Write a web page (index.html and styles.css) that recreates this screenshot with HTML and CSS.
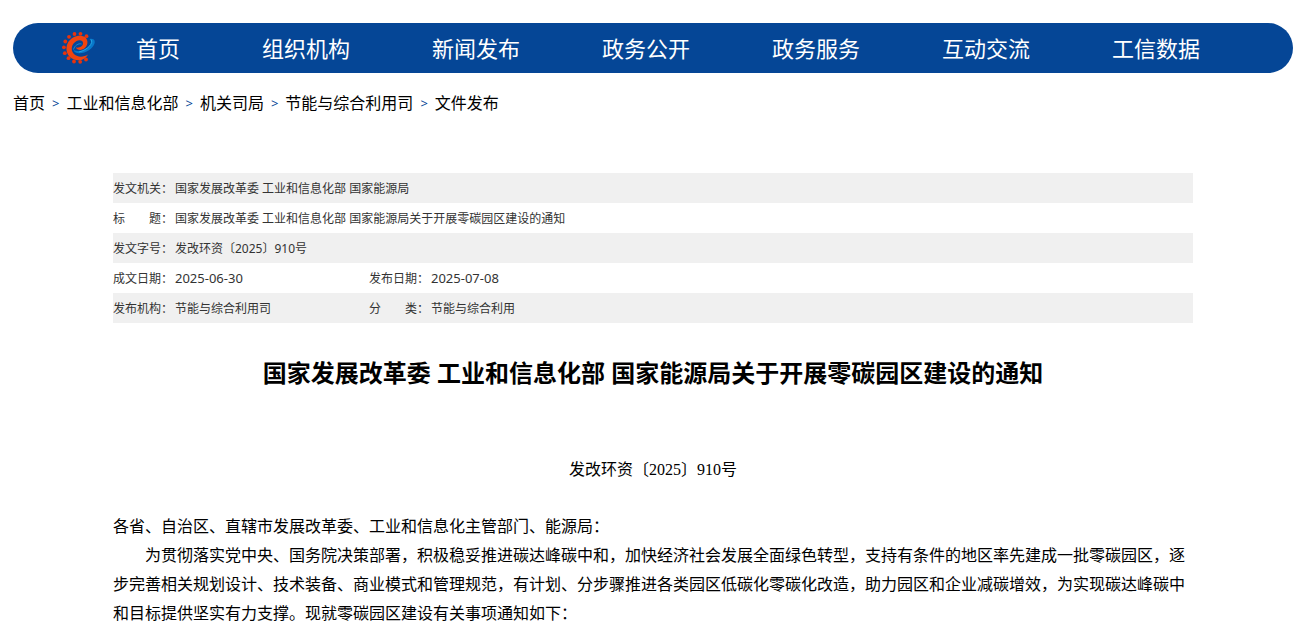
FILE: index.html
```html
<!DOCTYPE html>
<html lang="zh-CN">
<head>
<meta charset="utf-8">
<title>国家发展改革委 工业和信息化部 国家能源局关于开展零碳园区建设的通知</title>
<link rel="stylesheet" href="styles.css">
</head>
<body>
<header class="page">
  <nav class="nav" aria-label="主导航">
    <svg class="logo" viewBox="0 0 34 34" aria-hidden="true">
      <g fill="#e8330c">
        <circle cx="25.500" cy="5.200" r="1.900"/><circle cx="19.500" cy="2.800" r="1.900"/><circle cx="13.500" cy="3" r="1.900"/>
        <circle cx="8" cy="5.800" r="1.900"/><circle cx="4.300" cy="10.500" r="1.900"/><circle cx="2.900" cy="16.300" r="1.900"/>
        <circle cx="3.800" cy="22.200" r="1.900"/><circle cx="7.500" cy="27.200" r="1.900"/><circle cx="13" cy="30.500" r="1.900"/>
        <circle cx="19.200" cy="30.800" r="1.900"/><circle cx="25" cy="28.500" r="1.900"/>
      </g>
      <path d="M27 23.500C24.500 28.500 18.500 30.500 13 28.500C6 26 3.500 18 7 11.500C10.500 5.500 18 3 23.500 5.800C28 9 27 15 23 17.800C20 19.800 15.500 19 15 16.500C18 17.200 21.800 15.500 22 12.500C22.300 9.500 18.500 8.500 15.200 10.200C10.500 12.800 9.500 19 12.500 22.500C16 26.500 22.500 26.500 27 23.500Z" fill="#f0440f"/>
      <path d="M28.500 8C32.500 7.200 34.500 9.200 33.500 12.500C32 18 23 23.500 16 22C14 21.500 13 20.500 12.500 19C17.500 21.500 24.500 19 28.300 15C30.500 12.500 30.500 10 28.500 8Z" fill="#0878ca"/>
      <path d="M30 8.500C33 12 26.500 19 18 21" fill="none" stroke="#22a4e3" stroke-width="1"/>
      <path d="M12.500 18.500C13.500 14.500 17.500 12 20.500 13" fill="none" stroke="#1489d2" stroke-width="1"/>
    </svg>
    <ul class="menu">
      <li class="home"><a href="#">首页</a></li>
      <li><a href="#">组织机构</a></li>
      <li><a href="#">新闻发布</a></li>
      <li><a href="#">政务公开</a></li>
      <li><a href="#">政务服务</a></li>
      <li><a href="#">互动交流</a></li>
      <li><a href="#">工信数据</a></li>
    </ul>
  </nav>
  <nav class="crumbs" aria-label="当前位置">
    <a href="#">首页</a><span>&gt;</span><a href="#">工业和信息化部</a><span>&gt;</span><a href="#">机关司局</a><span>&gt;</span><a href="#">节能与综合利用司</a><span>&gt;</span><a href="#">文件发布</a>
  </nav>
</header>
<main class="article">
  <table class="meta">
    <colgroup><col class="label"><col class="value"><col class="label"><col></colgroup>
    <tbody>
      <tr><th scope="row">发文机关：</th><td colspan="3">国家发展改革委 工业和信息化部 国家能源局</td></tr>
      <tr><th scope="row">标　　题：</th><td colspan="3">国家发展改革委 工业和信息化部 国家能源局关于开展零碳园区建设的通知</td></tr>
      <tr><th scope="row">发文字号：</th><td colspan="3">发改环资〔2025〕910号</td></tr>
      <tr><th scope="row">成文日期：</th><td class="date">2025-06-30</td><th scope="row">发布日期：</th><td class="date">2025-07-08</td></tr>
      <tr><th scope="row">发布机构：</th><td>节能与综合利用司</td><th scope="row">分　　类：</th><td>节能与综合利用</td></tr>
    </tbody>
  </table>
  <h1>国家发展改革委 工业和信息化部 国家能源局关于开展零碳园区建设的通知</h1>
  <div class="body">
    <p class="number">发改环资〔2025〕910号</p>
    <p>各省、自治区、直辖市发展改革委、工业和信息化主管部门、能源局：</p>
    <p class="indent">为贯彻落实党中央、国务院决策部署，积极稳妥推进碳达峰碳中和，加快经济社会发展全面绿色转型，支持有条件的地区率先建成一批零碳园区，逐步完善相关规划设计、技术装备、商业模式和管理规范，有计划、分步骤推进各类园区低碳化零碳化改造，助力园区和企业减碳增效，为实现碳达峰碳中和目标提供坚实有力支撑。现就零碳园区建设有关事项通知如下：</p>
  </div>
</main>
</body>
</html>
```
FILE: styles.css
```css
body {
  margin: 0;
  background: #fff;
  color: #000;
  font-family: "Noto Sans", "Noto Sans CJK SC", sans-serif;
}

a {
  color: inherit;
  text-decoration: none;
}

.page {
  padding: 23px 10px 0 13px;
}

.nav {
  display: flex;
  align-items: center;
  height: 50px;
  padding: 0 52px 0 48px;
  border-radius: 25px;
  background: #054696;
}

.logo {
  flex: none;
  width: 34px;
  height: 34px;
}

.menu {
  display: flex;
  flex: 1;
  margin: 0;
  padding: 0;
  list-style: none;
  color: #fff;
  font-size: 22px;
  line-height: 48px;
  text-align: center;
}

.menu li {
  flex: 170;
}

.menu .home {
  flex: 126;
}

.menu a {
  display: block;
}

.crumbs {
  display: flex;
  flex-wrap: wrap;
  gap: 7px;
  margin-top: 18px;
  font-size: 16px;
  line-height: 24px;
}

.crumbs span {
  color: #054696;
  font-size: 13px;
}

.article {
  margin: 58px 110px 0 113px;
}

.meta {
  width: 100%;
  table-layout: fixed;
  border-collapse: collapse;
  color: #333;
  font-size: 12px;
  line-height: 28px;
}

.meta .label {
  width: 62px;
}

.meta .value {
  width: 194px;
}

.meta th,
.meta td {
  padding: 2px 0 0;
  font-weight: normal;
  text-align: left;
  white-space: nowrap;
}

.meta td.date {
  padding: 1px 0;
  font-size: 13px;
}

.meta tr:nth-child(odd) {
  background: #f0f0f0;
}

h1 {
  margin: 30px 0 0;
  font-size: 24px;
  line-height: 40px;
  text-align: center;
}

.body {
  margin-top: 62px;
  font-family: "Liberation Serif", "Noto Sans CJK SC", serif;
  font-size: 16px;
  line-height: 29px;
}

.body p {
  margin: 0;
}

.body .number {
  margin-bottom: 28px;
  text-align: center;
}

.body .indent {
  text-indent: 2em;
}
```
